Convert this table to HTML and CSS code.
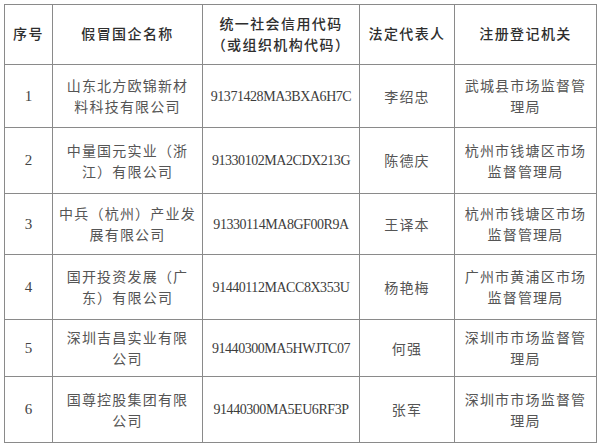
FILE: index.html
```html
<!DOCTYPE html>
<html lang="zh-CN">
<head>
<meta charset="utf-8">
<title>假冒国企名单</title>
<link rel="stylesheet" href="styles.css">
</head>
<body>
<table class="list">
  <colgroup>
    <col class="c-no">
    <col class="c-name">
    <col class="c-code">
    <col class="c-rep">
    <col class="c-org">
  </colgroup>
  <thead>
    <tr class="h-head">
      <th>序号</th>
      <th>假冒国企名称</th>
      <th>统一社会信用代码<br>（或组织机构代码）</th>
      <th>法定代表人</th>
      <th>注册登记机关</th>
    </tr>
  </thead>
  <tbody>
    <tr class="h-1">
      <td class="num">1</td>
      <td>山东北方欧锦新材<br>料科技有限公司</td>
      <td class="code">91371428MA3BXA6H7C</td>
      <td>李绍忠</td>
      <td>武城县市场监督管<br>理局</td>
    </tr>
    <tr class="h-2">
      <td class="num">2</td>
      <td>中量国元实业（浙<br>江）有限公司</td>
      <td class="code">91330102MA2CDX213G</td>
      <td>陈德庆</td>
      <td>杭州市钱塘区市场<br>监督管理局</td>
    </tr>
    <tr class="h-3">
      <td class="num">3</td>
      <td>中兵（杭州）产业发<br>展有限公司</td>
      <td class="code">91330114MA8GF00R9A</td>
      <td>王译本</td>
      <td>杭州市钱塘区市场<br>监督管理局</td>
    </tr>
    <tr class="h-4">
      <td class="num">4</td>
      <td>国开投资发展（广<br>东）有限公司</td>
      <td class="code">91440112MACC8X353U</td>
      <td>杨艳梅</td>
      <td>广州市黄浦区市场<br>监督管理局</td>
    </tr>
    <tr class="h-5">
      <td class="num">5</td>
      <td>深圳吉昌实业有限<br>公司</td>
      <td class="code">91440300MA5HWJTC07</td>
      <td>何强</td>
      <td>深圳市市场监督管<br>理局</td>
    </tr>
    <tr class="h-6">
      <td class="num">6</td>
      <td>国尊控股集团有限<br>公司</td>
      <td class="code">91440300MA5EU6RF3P</td>
      <td>张军</td>
      <td>深圳市市场监督管<br>理局</td>
    </tr>
  </tbody>
</table>
</body>
</html>
```
FILE: styles.css
```css
html, body {
  margin: 0;
  padding: 0;
  background: #ffffff;
}

body {
  padding: 4px 0 0 4px;
  font-family: "Noto Sans CJK SC", "Noto Sans", sans-serif;
  color: #555555;
}

.list {
  border-collapse: collapse;
  table-layout: fixed;
  width: 592px;
}

.c-no { width: 48px; }
.c-name { width: 150px; }
.c-code { width: 157px; }
.c-rep { width: 95px; }
.c-org { width: 142px; }

.list th,
.list td {
  border: 1px solid #8a8a8a;
  padding: 0;
  text-align: center;
  vertical-align: middle;
  font-size: 14px;
  line-height: 21px;
  letter-spacing: 1.2px;
  white-space: nowrap;
}

.list th {
  font-weight: 500;
  color: #2e2e2e;
  letter-spacing: 1.4px;
  padding-bottom: 2px;
}

.list td.num {
  font-family: "Liberation Serif", serif;
  font-size: 15px;
  letter-spacing: 0;
  color: #444444;
}

.list td.code {
  font-family: "Liberation Serif", serif;
  font-size: 14px;
  letter-spacing: -0.45px;
  color: #3c3c3c;
}

.h-head { height: 60px; }
.h-1 { height: 63px; }
.h-2 { height: 66px; }
.h-3 { height: 61px; }
.h-4 { height: 65px; }
.h-5 { height: 57px; }
.h-6 { height: 66px; }
```
